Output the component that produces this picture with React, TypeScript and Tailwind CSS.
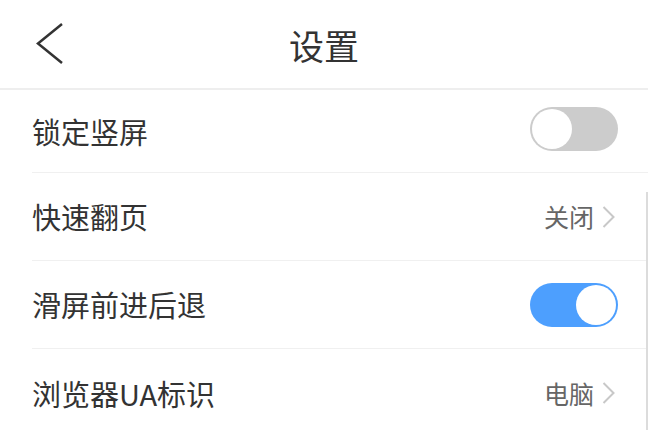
import { useState } from 'react';

const font = { fontFamily: '"Noto Sans CJK SC", "Noto Sans", sans-serif' };

const Toggle = ({ on, onChange, className = '' }: { on: boolean; onChange: () => void; className?: string }) => (
  <button
    onClick={onChange}
    className={`flex w-[88px] h-[44px] rounded-full p-[2px] ${
      on ? 'bg-[#4d9ffe] justify-end' : 'bg-[#cccccc] justify-start'
    } ${className}`}
  >
    <span className="block w-[40px] h-[40px] rounded-full bg-white" />
  </button>
);

const Arrow = () => (
  <svg width="13" height="22" viewBox="0 0 13 22" className="ml-[8px]">
    <polyline points="1.5,1 11.5,11 1.5,21" fill="none" stroke="#c8c8c8" strokeWidth="2" />
  </svg>
);

const Row = ({
  label,
  h,
  last,
  children,
}: {
  label: string;
  h: string;
  last?: boolean;
  children: React.ReactNode;
}) => (
  <div className={`flex items-center justify-between pr-[30px] ${h} ${last ? '' : 'border-b border-[#f0f0f0]'}`}>
    <span className="text-[29px] text-[#333333] leading-none">{label}</span>
    {children}
  </div>
);

const App = () => {
  const [lock, setLock] = useState(false);
  const [swipe, setSwipe] = useState(true);

  return (
    <div className="relative w-[648px] h-[430px] overflow-hidden bg-white" style={font}>
      <header className="grid grid-cols-[1fr_auto_1fr] items-center h-[90px] border-b-2 border-[#eeeeee]">
        <div className="pl-[36px] flex items-center">
          <svg width="28" height="42" viewBox="0 0 28 42">
            <polyline points="26,1 2,20.5 26,40" fill="none" stroke="#333333" strokeWidth="2.5" />
          </svg>
        </div>
        <h1 className="text-[35px] text-[#333333] leading-none">设置</h1>
        <div />
      </header>

      <div className="pl-[32px]">
        <Row label="锁定竖屏" h="h-[83px]">
          <Toggle on={lock} onChange={() => setLock(!lock)} className="mb-[4px]" />
        </Row>
        <Row label="快速翻页" h="h-[88px]">
          <div className="flex items-center pr-[3px]">
            <span className="text-[25px] text-[#666666] leading-none">关闭</span>
            <Arrow />
          </div>
        </Row>
        <Row label="滑屏前进后退" h="h-[88px]">
          <Toggle on={swipe} onChange={() => setSwipe(!swipe)} />
        </Row>
        <Row label="浏览器UA标识" h="h-[88px]" last>
          <div className="flex items-center pr-[3px]">
            <span className="text-[25px] text-[#666666] leading-none">电脑</span>
            <Arrow />
          </div>
        </Row>
      </div>

      {/* scroll indicator */}
      <div className="absolute right-0 top-[192px] bottom-0 w-[2px] bg-[#dcdcdc]" />
    </div>
  );
};

export default App;
